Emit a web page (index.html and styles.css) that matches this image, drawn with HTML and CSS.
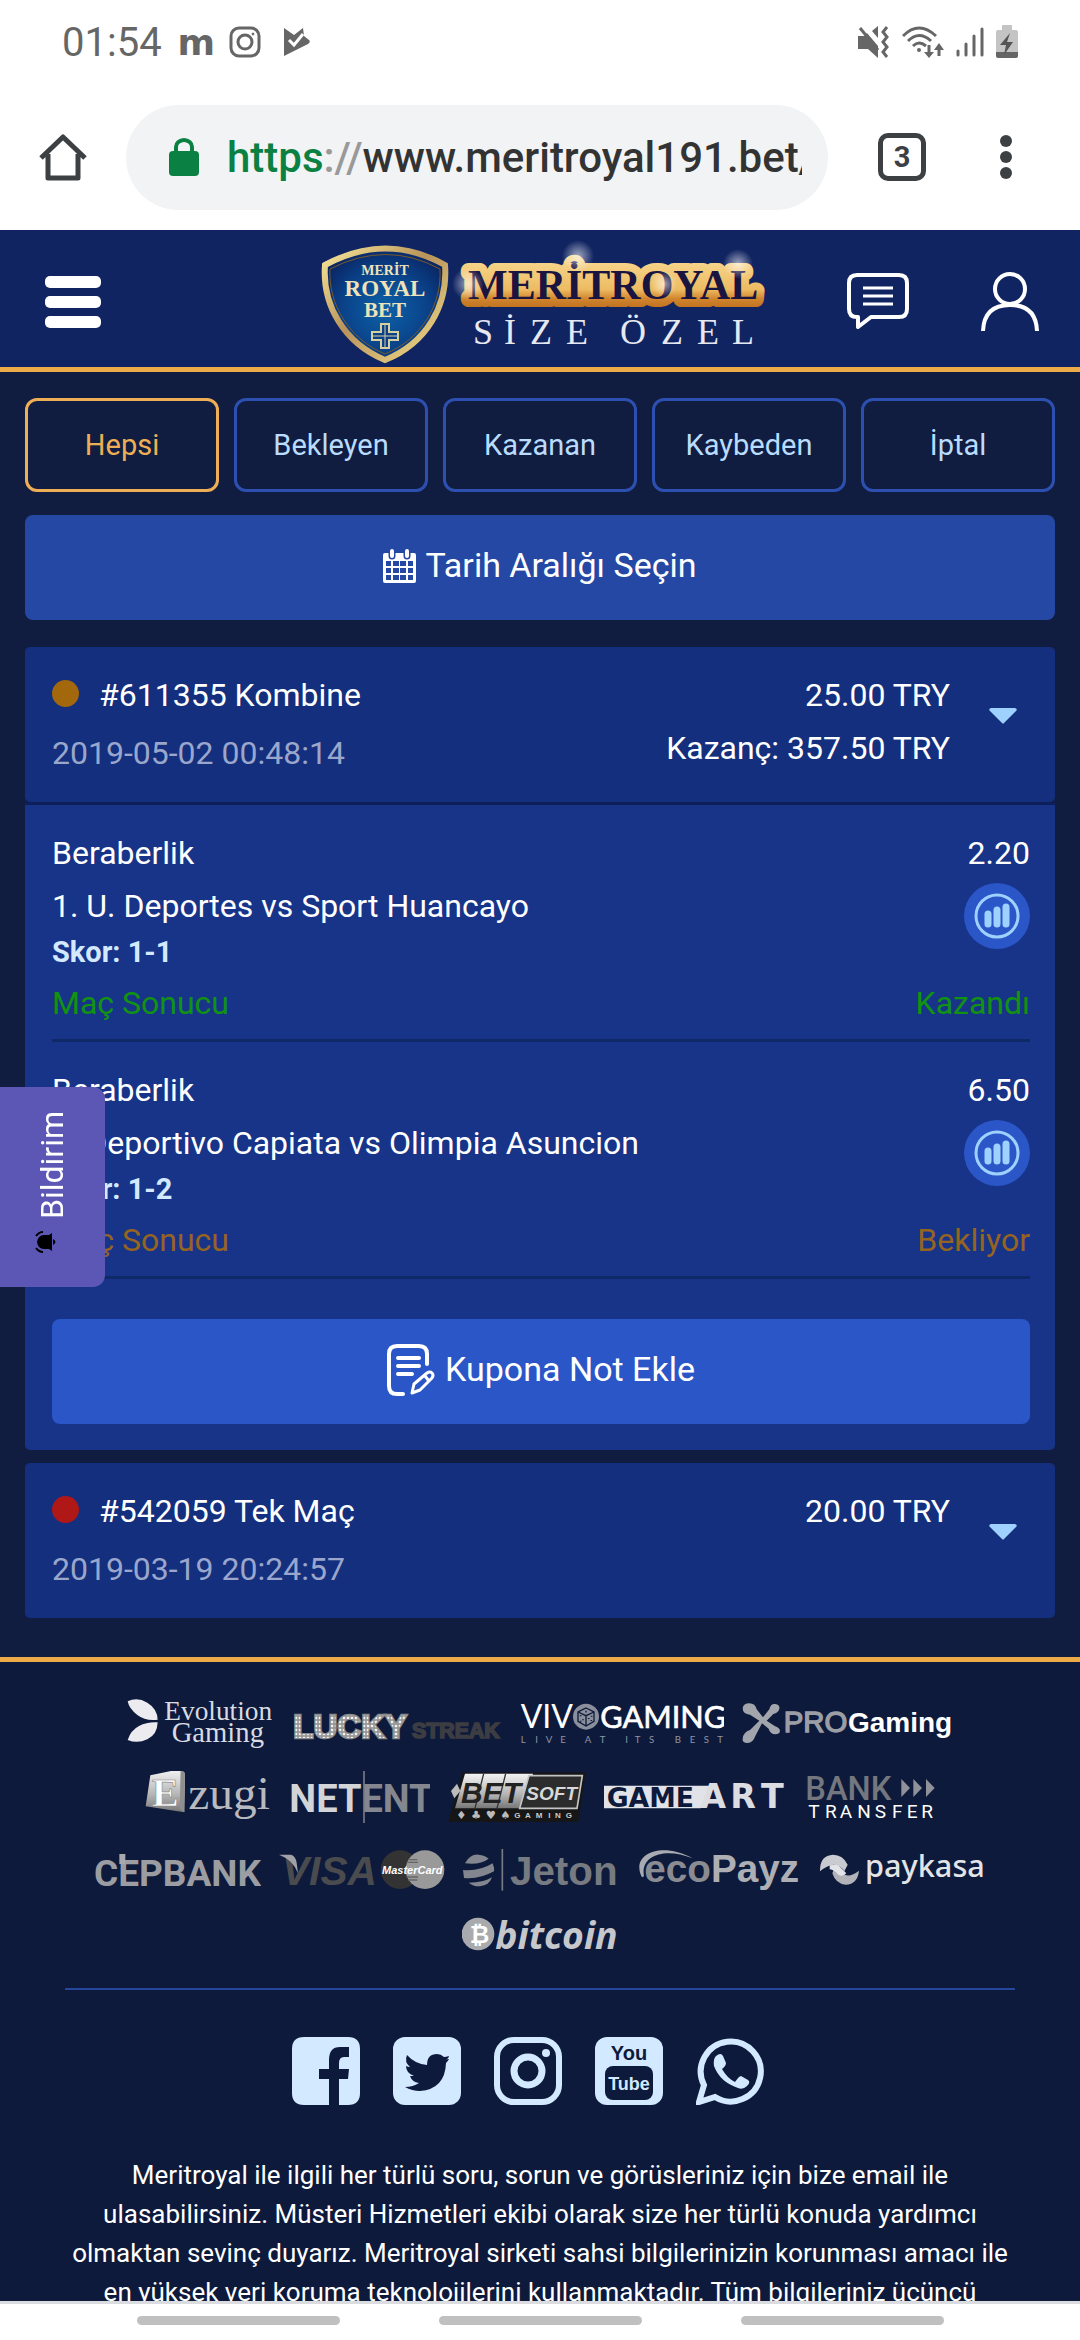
FILE: index.html
```html
<!DOCTYPE html>
<html lang="tr">
<head>
  <meta charset="UTF-8" />
  <meta name="viewport" content="width=device-width, initial-scale=1.0">
  <title>Kuponlarım</title>
  <link rel="stylesheet" href="styles.css">
</head>
<body>
  <div class="status-bar">
    <span class="clock">01:54</span>
    <span class="status-m">m</span>
    <svg class="status-insta" width="32" height="32" viewBox="0 0 32 32" fill="none" stroke="#666" stroke-width="3">
      <rect x="2" y="2" width="28" height="28" rx="8"/>
      <circle cx="16" cy="16" r="7"/>
      <circle cx="24" cy="8" r="1" fill="#666" stroke-width="1"/>
    </svg>
    <svg class="status-play" width="28" height="28" viewBox="0 0 28 28">
      <path d="M2 0l10 7 9-7 1 8 5 4q2 2-1 4L2 28z" fill="#666"/>
      <path d="M7 12l5 5 9-11" fill="none" stroke="#fff" stroke-width="3"/>
    </svg>
    <div class="status-right">
      <svg width="32" height="32" viewBox="0 0 32 32" fill="none" stroke="#666" stroke-width="3">
        <path d="M0 10h6l3-3 11 13v12l-10-9H0z" fill="#666" stroke="none"/>
        <path d="M14 5l6-5v12z" fill="#666" stroke="none"/>
        <path d="M2 2l18 22"/>
        <path d="M29 1l-4 5 4 5-4 5 4 5-4 5 4 5"/>
      </svg>
      <svg width="42" height="32" viewBox="0 0 42 32" fill="none" stroke="#666" stroke-width="3">
        <path d="M1 10q16-16 33 0M6 15q11-11 23 0M11 20q6-6 13 0"/>
        <circle cx="17" cy="24" r="2" fill="#666" stroke="none"/>
        <path d="M27 19v9M37 30v-9"/>
        <path d="M22 26h10l-5 6zM32 24h10l-5-7z" fill="#666" stroke="none"/>
      </svg>
      <svg width="28" height="30" viewBox="0 0 28 30" stroke="#666" stroke-width="3" stroke-linecap="round">
        <path d="M2 24v4M10 17v11M18 9v19M26 2v26"/>
      </svg>
      <svg width="22" height="34" viewBox="0 0 22 34">
        <path d="M6 0h10v5h4q2 0 2 2v20H0V7q0-2 2-2h4z" fill="#c4c4c4"/>
        <path d="M0 27h22v4q0 2-2 2H2q-2 0-2-2z" fill="#666"/>
        <path d="M14 8L4 20h6L8 30l9-13h-6z" fill="#555"/>
      </svg>
    </div>
  </div>

  <div class="toolbar">
    <button class="tool-btn" aria-label="Ana sayfa">
      <svg width="48" height="48" viewBox="0 0 48 48" fill="none" stroke="#3c4043" stroke-width="5" stroke-linejoin="round">
        <path d="M2 25L24 4l22 21M9 21v24h30V21"/>
      </svg>
    </button>
    <div class="url-pill">
      <svg width="30" height="38" viewBox="0 0 30 38">
        <rect y="13" width="30" height="25" rx="4" fill="#0b8043"/>
        <path d="M7 14V9a8 7 0 0 1 16 0v5" fill="none" stroke="#0b8043" stroke-width="4"/>
      </svg>
      <div class="url"><span class="url-scheme">https</span><span class="url-sep">://</span>www.meritroyal191.bet/</div>
    </div>
    <button class="tool-btn tab-count" aria-label="Sekmeler">3</button>
    <button class="tool-btn" aria-label="Menü">
      <svg width="12" height="46" viewBox="0 0 12 46" fill="#3c4043">
        <circle cx="6" cy="7" r="6"/><circle cx="6" cy="23" r="6"/><circle cx="6" cy="39" r="6"/>
      </svg>
    </button>
  </div>

  <div class="page">
    <header class="site-header">
      <button class="icon-btn" aria-label="Menü">
        <svg width="56" height="52" viewBox="0 0 56 52" fill="#fff">
          <rect y="0" width="56" height="12" rx="5"/><rect y="20" width="56" height="12" rx="5"/><rect y="40" width="56" height="12" rx="5"/>
        </svg>
      </button>
      <a href="#" class="brand" aria-label="Merit Royal">
        <svg width="446" height="124" viewBox="317 240 446 124">
          <defs>
            <linearGradient id="gold" x1="0" y1="0" x2="0" y2="1">
              <stop offset="0" stop-color="#f6d48a"/><stop offset=".6" stop-color="#edbb62"/><stop offset=".8" stop-color="#d0852e"/><stop offset="1" stop-color="#c0711f"/>
            </linearGradient>
            <linearGradient id="rim" x1="0" y1="0" x2="1" y2="1">
              <stop offset="0" stop-color="#f8e698"/><stop offset=".45" stop-color="#b8935a"/><stop offset="1" stop-color="#f4e08c"/>
            </linearGradient>
            <radialGradient id="blue" cx=".5" cy=".55" r=".6">
              <stop offset="0" stop-color="#0d62a8"/><stop offset=".6" stop-color="#0a4188"/><stop offset="1" stop-color="#0a2462"/>
            </radialGradient>
            <radialGradient id="shine">
              <stop offset="0" stop-color="#fff" stop-opacity=".6"/><stop offset="1" stop-color="#fff" stop-opacity="0"/>
            </radialGradient>
          </defs>
          <path d="M323 265Q384 232 443 265C446 305 425 343 383 360C342 343 320 305 323 265z" fill="url(#blue)" stroke="url(#rim)" stroke-width="6"/>
          <path d="M328 269Q384 240 438 269C440 304 420 339 383 354C347 339 326 304 328 269z" fill="none" stroke="#7a5a2a" stroke-width="1"/>
          <g fill="#f0e2b8" font-family="Liberation Serif, serif" font-weight="bold" text-anchor="middle">
            <text x="383" y="275" font-size="14">MERİT</text>
            <text x="383" y="296" font-size="23">ROYAL</text>
            <text x="383" y="317" font-size="21">BET</text>
          </g>
          <path d="M379 324h8v8h9v8h-9v8h-8v-8h-9v-8h9z" fill="#0a4188" stroke="#d8cf9e" stroke-width="2"/>
          <path d="M383 324v24M370 336h26" stroke="#d8cf9e"/>
          <text x="466" y="299" font-family="Liberation Serif, serif" font-size="42" font-weight="bold" fill="#1a1440" stroke="url(#gold)" stroke-width="16" stroke-linejoin="round" paint-order="stroke">MERİTROYAL</text>
          <circle cx="576" cy="256" r="16" fill="url(#shine)"/>
          <circle cx="736" cy="264" r="15" fill="url(#shine)"/>
          <circle cx="662" cy="284" r="13" fill="url(#shine)"/>
          <circle cx="466" cy="284" r="16" fill="url(#shine)"/>
          <text x="471 502 528 564 618 659 695 730" y="344" fill="#e6e8f2" font-family="Liberation Serif, serif" font-size="36">SİZEÖZEL</text>
        </svg>
      </a>
      <div class="header-right">
        <button class="icon-btn" aria-label="Mesajlar">
          <svg width="62" height="58" viewBox="0 0 62 58" fill="none" stroke="#fff" stroke-width="4">
            <path d="M10 2h42q8 0 8 8v26q0 8-8 8H24L11 54V44h-1q-8 0-8-8V10q0-8 8-8z" stroke-linejoin="round"/>
            <path d="M16 15h30M16 23h30M16 31h30" stroke-width="3"/>
          </svg>
        </button>
        <button class="icon-btn" aria-label="Hesabım">
          <svg width="58" height="60" viewBox="0 0 58 60" fill="none" stroke="#fff" stroke-width="4">
            <circle cx="29" cy="17" r="15"/>
            <path d="M2 59Q3 33 29 33t27 26"/>
          </svg>
        </button>
      </div>
    </header>

    <main class="content">
      <div class="tabs">
        <button class="tab active">Hepsi</button>
        <button class="tab">Bekleyen</button>
        <button class="tab">Kazanan</button>
        <button class="tab">Kaybeden</button>
        <button class="tab">İptal</button>
      </div>

      <button class="btn date-btn">
        <svg width="33" height="35" viewBox="0 0 33 35">
          <path d="M2 5h29q2 0 2 2v26q0 2-2 2H2q-2 0-2-2V7q0-2 2-2z" fill="#fff"/>
          <path d="M3 13h5v5H3zM10 13h6v5h-6zM17 13h6v5h-6zM25 13h5v5h-5zM3 20h5v5H3zM10 20h6v5h-6zM17 20h6v5h-6zM25 20h5v5h-5zM3 27h5v5H3zM10 27h6v5h-6zM17 27h6v5h-6zM25 27h5v5h-5z" fill="#2548a5"/>
          <path d="M9 3v5M24 3v5" stroke="#2548a5" stroke-width="7" stroke-linecap="round"/>
          <path d="M9 3v5M24 3v5" stroke="#fff" stroke-width="4" stroke-linecap="round"/>
        </svg>
        Tarih Aralığı Seçin
      </button>

      <section class="coupon">
        <button class="coupon-head">
          <span class="coupon-info">
            <span class="coupon-title"><i class="dot pending"></i>#611355 Kombine</span>
            <span class="coupon-date">2019-05-02 00:48:14</span>
          </span>
          <span class="coupon-sum">
            <span>25.00 TRY</span>
            <span>Kazanç: 357.50 TRY</span>
          </span>
          <svg class="caret" width="28" height="16" viewBox="0 0 28 16"><path d="M2 0h24q3 1 1 3L15 15q-1 1-2 0L1 3q-2-2 1-3z" fill="#9fd1ff"/></svg>
        </button>
        <div class="coupon-body">
          <div class="bet">
            <div class="row"><span>Beraberlik</span><span>2.20</span></div>
            <div class="row">
              <div>
                <div>1. U. Deportes vs Sport Huancayo</div>
                <div class="score">Skor: 1-1</div>
              </div>
              <button class="stats" aria-label="İstatistik">
                <svg width="46" height="46" viewBox="0 0 46 46" fill="none" stroke="#9fd1ff" stroke-linecap="round">
                  <circle cx="23" cy="23" r="21" stroke-width="3"/>
                  <path d="M14 21v10M23 17v14M32 14v17" stroke-width="7"/>
                </svg>
              </button>
            </div>
            <div class="row result won"><span>Maç Sonucu</span><span>Kazandı</span></div>
          </div>
          <div class="bet">
            <div class="row"><span>Beraberlik</span><span>6.50</span></div>
            <div class="row">
              <div>
                <div>1. Deportivo Capiata vs Olimpia Asuncion</div>
                <div class="score">Skor: 1-2</div>
              </div>
              <button class="stats" aria-label="İstatistik">
                <svg width="46" height="46" viewBox="0 0 46 46" fill="none" stroke="#9fd1ff" stroke-linecap="round">
                  <circle cx="23" cy="23" r="21" stroke-width="3"/>
                  <path d="M14 21v10M23 17v14M32 14v17" stroke-width="7"/>
                </svg>
              </button>
            </div>
            <div class="row result waiting"><span>Maç Sonucu</span><span>Bekliyor</span></div>
          </div>
          <button class="btn note-btn">
            <svg width="49" height="52" viewBox="0 0 49 52" fill="none" stroke="#fff" stroke-width="4" stroke-linecap="round" stroke-linejoin="round">
              <path d="M40 20V10q0-8-8-8H10q-8 0-8 8v32q0 8 8 8h6"/>
              <path d="M11 14h21M11 22h21M11 30h14"/>
              <path d="M25 49l2-9 13-11q3-2 5 0t0 5L33 46zM38 32l4 5" stroke-width="3"/>
            </svg>
            Kupona Not Ekle
          </button>
        </div>
      </section>

      <section class="coupon">
        <button class="coupon-head">
          <span class="coupon-info">
            <span class="coupon-title"><i class="dot lost"></i>#542059 Tek Maç</span>
            <span class="coupon-date">2019-03-19 20:24:57</span>
          </span>
          <span class="coupon-sum">
            <span>20.00 TRY</span>
          </span>
          <svg class="caret" width="28" height="16" viewBox="0 0 28 16"><path d="M2 0h24q3 1 1 3L15 15q-1 1-2 0L1 3q-2-2 1-3z" fill="#9fd1ff"/></svg>
        </button>
      </section>
    </main>

    <footer class="site-footer">
      <div class="partners">
        <div class="partner-row">
          <svg width="147" height="52" viewBox="144 54 441 156">
            <path d="M146 64Q175 50 205 68T236 119Q200 124 175 105T146 64zM236 127Q205 125 180 138T146 180Q175 192 205 178T236 127z" fill="#ececf0"/>
            <g fill="#d9dbe2" font-family="Liberation Serif, serif"><text x="256" y="120" font-size="82">Evolution</text><text x="278" y="187" font-size="86">Gaming</text></g>
          </svg>
          <svg width="210" height="52" viewBox="642 54 630 156">
            <defs><pattern id="bulbs" width="12" height="12" patternUnits="userSpaceOnUse"><rect width="12" height="12" fill="#999"/><circle cx="6" cy="6" r="4" fill="#f2f2f2"/></pattern></defs>
            <text x="646" y="173" font-family="Liberation Sans, sans-serif" font-weight="bold" font-size="99" fill="url(#bulbs)" stroke="#8a8a8a" stroke-width="8" paint-order="stroke">LUCKY</text>
            <text x="1002" y="173" font-family="Liberation Sans, sans-serif" font-weight="bold" font-size="64" fill="#3c3d42" stroke="#3c3d42" stroke-width="5">STREAK</text>
          </svg>
          <svg width="204" height="52" viewBox="1326 54 612 156" fill="#fff" font-family="Lato, sans-serif">
            <text x="1328" y="144" font-size="96">VIV</text>
            <circle cx="1524" cy="110" r="39" fill="#8b8f9c"/>
            <path d="M1524 84l24 12v28l-24 14-24-14V96zM1500 96l24 11 24-11M1524 107v31" fill="none" stroke="#0d1a3b" stroke-width="4"/>
            <path d="M1508 106v3M1515 118v3M1508 122v3M1532 114v3M1540 120v3M1541 107v3M1522 95h4" stroke="#0d1a3b" stroke-width="5"/>
            <text x="1567" y="144" font-size="92" stroke="#fff" stroke-width="2">GAMING</text>
            <text x="1328 1372 1403 1447 1520 1565 1642 1670 1713 1790 1835 1877 1918" y="190" font-size="29" fill="#9095a5">LIVEATITSBEST</text>
          </svg>
          <svg width="212" height="52" viewBox="608 54 636 156" font-family="Liberation Sans, sans-serif" font-size="84">
            <path d="M610 85Q612 70 630 70T652 88L671 112 690 88Q694 70 708 72T720 86Q718 98 702 102L682 122 706 138Q722 144 722 153T708 163Q692 162 688 146L668 130 648 168Q640 190 624 189T610 176Q612 156 632 150L660 122 632 104Q610 102 610 85z" fill="#a3a5ac"/>
            <text x="733" y="156" fill="#9c9ea6" stroke="#9c9ea6" stroke-width="4" font-size="88">PRO</text>
            <text x="926" y="156" fill="#fff" font-weight="bold">Gaming</text>
          </svg>
        </div>
        <div class="partner-row">
          <svg width="127" height="52" viewBox="198 276 381 156" font-family="Liberation Serif, serif">
            <defs><linearGradient id="steel" x1="0" y1="0" x2="0" y2="1"><stop offset="0" stop-color="#f4f4f4"/><stop offset=".6" stop-color="#b4b4b4"/><stop offset="1" stop-color="#777"/></linearGradient></defs>
            <path d="M214 289L305 270l13 13-2 117-116-18z" fill="url(#steel)"/>
            <path d="M305 270l13 13-2 117-14-10z" fill="#8f8f8f"/>
            <text x="218" y="382" font-size="122" font-weight="bold" fill="#fff" stroke="#888" stroke-width="2">E</text>
            <text x="328" y="390" font-size="142" fill="#b9babf">zugi</text>
          </svg>
          <svg width="140" height="52" viewBox="636 276 420 156">
            <text x="634" y="400" font-family="Roboto, sans-serif" font-weight="bold" font-size="114" fill="#d3d4d8">NET<tspan fill="#84878f">ENT</tspan></text>
            <path d="M858 276v156" stroke="#777a84" stroke-width="5"/>
          </svg>
          <svg width="138" height="52" viewBox="1107 276 414 156" font-family="Liberation Sans, sans-serif" font-weight="bold">
            <path d="M1150 280h370l-22 148h-390z" fill="#161616"/>
            <path d="M1158 284h204l-30 104h-204z" fill="url(#steel)"/>
            <path d="M1350 290h160l-16 98h-172z" fill="#2c2c2c" stroke="#c4c4c4" stroke-width="5"/>
            <path d="M1116 336l18-22 10 22-18 22z" fill="#bbb"/>
            <path d="M1214 284l-26 104M1280 284l-26 104" stroke="#333" stroke-width="4"/>
            <text x="1146" y="372" font-size="90" font-style="italic" fill="#222">BET</text>
            <text x="1342" y="364" font-size="57" font-style="italic" fill="#d8d8d8">SOFT</text>
            <text x="1132 1176 1220 1264" y="420" font-family="DejaVu Sans, sans-serif" font-size="34" fill="#bbb">♦♣♥♠</text>
            <text x="1306 1338 1370 1408 1428 1460" y="418" font-size="24" fill="#ccc">GAMING</text>
          </svg>
          <svg width="184" height="52" viewBox="195 276 552 156" font-family="DejaVu Sans, sans-serif" font-weight="bold">
            <path d="M195 320h328l-38 68H195z" fill="#e2e3e8"/>
            <text x="203" y="383" font-size="80" fill="#0d1a3b">GAME</text>
            <text x="484 574 666" y="388" font-size="100" fill="#dcdde2">ART</text>
          </svg>
          <svg width="130" height="52" viewBox="801 276 390 156" font-family="Roboto, sans-serif">
            <text x="799" y="363" font-size="98" font-weight="500" fill="#75777e">BANK</text>
            <path d="M1087 300l26 27-26 27zM1123 300l26 27-26 27zM1161 300l26 27-26 27z" fill="#90929a"/>
            <text x="808 858 902 955 1007 1059 1103 1147" y="416" font-size="57" fill="#fff">TRANSFER</text>
          </svg>
        </div>
        <div class="partner-row">
          <svg width="166" height="52" viewBox="45 498 498 156">
            <text x="42" y="623" font-family="Roboto, sans-serif" font-weight="bold" font-size="111" fill="#9b9da3">CEPBANK</text>
            <path d="M118 528h18v30h-18z" fill="#a7a9af"/>
          </svg>
          <svg width="166" height="52" viewBox="597 498 498 156" font-family="Liberation Sans, sans-serif" font-weight="bold" font-style="italic">
            <text x="606" y="620" font-size="122" fill="#4a4b4f">VISA</text>
            <path d="M597 530h36q14 4 17 24l4 32q-14-40-57-56z" fill="#a0a2a8"/>
            <circle cx="960" cy="575" r="58" fill="#333"/><circle cx="1035" cy="575" r="58" fill="#999"/>
            <path d="M984 545h28M980 553h34M980 597h34M984 606h28" stroke="#666" stroke-width="4"/>
            <text x="906" y="587" font-size="33" fill="#fff">MasterCard</text>
          </svg>
          <svg width="156" height="52" viewBox="1149 498 468 156">
            <path d="M1155 556Q1170 528 1196 530 1215 532 1226 542 1200 562 1155 556zM1149 576Q1200 580 1238 556 1244 570 1242 580 1200 604 1152 600zM1166 614Q1210 614 1236 598 1228 622 1200 625 1180 626 1166 614z" fill="#83868e"/>
            <path d="M1267 513v125" stroke="#777a84" stroke-width="5"/>
            <text x="1290" y="622" font-family="Liberation Sans, sans-serif" font-weight="bold" font-size="121" fill="#777a80">Jeton</text>
          </svg>
          <svg width="165" height="52" viewBox="291 498 495 156">
            <path d="M306 598C270 530 360 488 458 541 380 508 300 528 312 595z" fill="#a9abb2"/>
            <text x="313" y="612" font-family="Liberation Sans, sans-serif" font-weight="bold" font-size="116" fill="#8a8c92">eco<tspan fill="#adafb5">Payz</tspan></text>
          </svg>
          <svg width="166" height="52" viewBox="843 498 498 156">
            <path d="M843 580Q842 532 882 530 912 530 926 560L916 580Q890 540 843 580z" fill="#c9cbd0"/>
            <path d="M890 560l28 30q16 8 42-12-4 40-40 42-30-2-40-34z" fill="#b1b3b9"/>
            <path d="M872 562q16-4 26 0l24 24q-12 12-24 4-12-14-26-16z" fill="#e3e4e8"/>
            <text x="978" y="598" font-family="Noto Sans, sans-serif" font-weight="500" font-size="92" fill="#e3e4e8">paykasa</text>
          </svg>
        </div>
        <div class="partner-row">
          <svg width="156" height="34" viewBox="1149 711 468 102">
            <circle cx="1197" cy="762" r="49" fill="#a9aaae"/>
            <text x="1172" y="790" font-family="DejaVu Sans, sans-serif" font-weight="bold" font-size="72" fill="#fff">₿</text>
            <text x="1249" y="808" font-family="Noto Sans, sans-serif" font-weight="bold" font-style="italic" font-size="112" fill="#c6c7cb">bitcoin</text>
          </svg>
        </div>
      </div>

      <div class="social">
        <a href="#" aria-label="Facebook">
          <svg width="68" height="68" viewBox="0 0 68 68"><path d="M12 0h44q12 0 12 12v44q0 12-12 12h-9V42h9l1-10H47v-6q0-6 5-6h5V10h-9Q37 10 37 23v9H27v10h10v26H12Q0 68 0 56V12Q0 0 12 0z" fill="#d3e9ff"/></svg>
        </a>
        <a href="#" aria-label="Twitter">
          <svg width="68" height="68" viewBox="0 0 68 68"><rect width="68" height="68" rx="12" fill="#d3e9ff"/><path d="M56 22q-2 0-3 1 3-2 3-4-3 1-5 1-3-3-7-3-10 0-10 11-12-1-20-10-3 7 3 12-2 0-4-1 0 7 8 10h-4q2 6 9 7-6 4-14 4 7 4 15 4 25-2 26-28 2-2 3-4z" fill="#0d1a3b"/></svg>
        </a>
        <a href="#" aria-label="Instagram">
          <svg width="68" height="68" viewBox="0 0 68 68" fill="none" stroke="#d3e9ff"><rect x="3" y="3" width="62" height="62" rx="17" stroke-width="6"/><circle cx="34" cy="34" r="14" stroke-width="7"/><circle cx="52" cy="16" r="4" fill="#d3e9ff" stroke="none"/></svg>
        </a>
        <a href="#" aria-label="YouTube">
          <svg width="68" height="68" viewBox="0 0 68 68" font-family="Liberation Sans, sans-serif" font-weight="bold" text-anchor="middle">
            <rect width="68" height="68" rx="12" fill="#d3e9ff"/><rect x="10" y="29" width="48" height="34" rx="8" fill="#0d1a3b"/>
            <text x="34" y="23" font-size="20" fill="#0d1a3b">You</text><text x="34" y="53" font-size="18" fill="#d3e9ff">Tube</text>
          </svg>
        </a>
        <a href="#" aria-label="WhatsApp">
          <svg width="68" height="68" viewBox="0 0 68 68"><path d="M3 65l5-17A30 30 0 1 1 19 60z" fill="none" stroke="#d3e9ff" stroke-width="6"/><path d="M20 19q5-4 7 0l3 7q0 3-4 6 5 9 13 13 4-6 6-6l7 4q3 2-1 6-4 4-9 2-18-6-24-22-1-7 2-10z" fill="#d3e9ff"/></svg>
        </a>
      </div>

      <p class="about">Meritroyal ile ilgili her türlü soru, sorun ve görüsleriniz için bize email ile ulasabilirsiniz. Müsteri Hizmetleri ekibi olarak size her türlü konuda yardımcı olmaktan sevinç duyarız. Meritroyal sirketi sahsi bilgilerinizin korunması amacı ile en yüksek veri koruma teknolojilerini kullanmaktadır. Tüm bilgileriniz üçüncü</p>
    </footer>
  </div>

  <button class="notice">
    <svg width="22" height="22" viewBox="0 0 22 22"><path d="M2 17l2-3V9q0-6 7-7 7 1 7 7v5l2 3zM8 18h6q-3 5-6 0z"/><path d="M1 8q0-4 4-7M21 8q0-4-4-7" fill="none" stroke="#000" stroke-width="2"/></svg>
    Bildirim
  </button>

  <div class="nav-hints"><span></span><span></span><span></span></div>
</body>
</html>
```

FILE: styles.css
```css
* {
  box-sizing: border-box;
}

body {
  margin: 0;
  height: 100vh;
  display: flex;
  flex-direction: column;
  overflow: hidden;
  background: #fff;
  color: #fff;
  font-family: Roboto, sans-serif;
  font-size: 32px;
  line-height: 53px;
}

button {
  border: none;
  margin: 0;
  padding: 0;
  background: none;
  color: inherit;
  font: inherit;
  cursor: pointer;
}

svg {
  display: block;
  flex: none;
}

/* phone status bar */
.status-bar {
  flex: none;
  display: flex;
  align-items: center;
  height: 84px;
  padding: 0 62px;
  color: #666;
}

.clock {
  font-size: 40px;
}

.status-m {
  margin-left: 16px;
  font-family: "DejaVu Sans", sans-serif;
  font-size: 36px;
  font-weight: bold;
}

.status-insta {
  margin-left: 14px;
}

.status-play {
  margin-left: 21px;
}

.status-right {
  display: flex;
  align-items: center;
  gap: 12px;
  margin-left: auto;
}

/* browser toolbar */
.toolbar {
  flex: none;
  display: flex;
  align-items: center;
  height: 146px;
  padding: 0 68px 0 39px;
}

.url-pill {
  flex: 1;
  display: flex;
  align-items: center;
  gap: 28px;
  height: 105px;
  margin: 0 50px 0 39px;
  padding: 0 26px 0 43px;
  border-radius: 53px;
  background: #f1f3f4;
  overflow: hidden;
}

.url {
  flex: 1;
  min-width: 0;
  overflow: hidden;
  white-space: nowrap;
  color: #333;
  font-size: 42px;
  font-weight: 500;
}

.url-scheme {
  color: #0b8043;
}

.url-sep {
  color: #999;
}

.tab-count {
  width: 48px;
  height: 48px;
  margin-right: 74px;
  border: 5px solid #3c4043;
  border-radius: 10px;
  color: #3c4043;
  font-size: 29px;
  font-weight: bold;
  line-height: 38px;
}

/* site */
.page {
  flex: 1;
  min-height: 0;
  overflow: hidden;
  background: #101d40;
}

.site-header {
  display: grid;
  grid-template-columns: 1fr auto 1fr;
  align-items: center;
  padding: 10px 41px 3px 45px;
  border-bottom: 5px solid #eeac48;
  background: #112462;
}

.site-header > .icon-btn {
  justify-self: start;
}

.header-right {
  display: flex;
  align-items: center;
  justify-content: flex-end;
  gap: 72px;
}

.content {
  padding: 26px 25px 39px;
}

.tabs {
  display: grid;
  grid-template-columns: repeat(5, 1fr);
  gap: 15px;
  margin-bottom: 23px;
}

.tab {
  height: 94px;
  border: 3px solid #2d50b0;
  border-radius: 12px;
  color: #b9dcff;
  font-size: 29px;
}

.tab.active {
  border-color: #eeae55;
  color: #eeae55;
}

.btn {
  display: flex;
  align-items: center;
  justify-content: center;
  gap: 9px;
  width: 100%;
  height: 105px;
  padding-bottom: 4px;
  border-radius: 8px;
  font-size: 34px;
}

.date-btn {
  margin-bottom: 27px;
  background: #2548a5;
}

.coupon + .coupon {
  margin-top: 13px;
}

.coupon-head {
  display: flex;
  width: 100%;
  padding: 22px 38px 22px 27px;
  border-radius: 5px;
  background: #142f7d;
  text-align: left;
}

.coupon-info,
.coupon-sum {
  display: flex;
  flex-direction: column;
}

.coupon-info {
  flex: 1;
  gap: 5px;
}

.coupon-sum {
  text-align: right;
}

.coupon-title {
  display: flex;
  align-items: center;
}

.coupon-date {
  color: #9aa6cc;
}

.dot {
  width: 27px;
  height: 27px;
  margin: 0 20px 4px 0;
  border-radius: 50%;
}

.pending {
  background: #a3670c;
}

.lost {
  background: #b01818;
}

.caret {
  align-self: center;
  margin: 0 0 17px 39px;
}

.coupon-body {
  padding: 0 25px 26px 27px;
  border-top: 3px solid #0d1f58;
  border-radius: 0 0 5px 5px;
  background: #173489;
}

.bet {
  padding: 22px 0 9px;
  border-bottom: 3px solid #0f2867;
}

.row {
  display: flex;
  justify-content: space-between;
}

.score {
  color: #d3e9ff;
  font-size: 29px;
  font-weight: bold;
  line-height: 39px;
}

.stats {
  display: flex;
  align-items: center;
  justify-content: center;
  width: 66px;
  height: 66px;
  margin-top: 3px;
  border-radius: 50%;
  background: #2b56c7;
}

.result {
  margin-top: 5px;
}

.won {
  color: #129212;
}

.waiting {
  color: #966420;
}

.note-btn {
  margin-top: 40px;
  background: #2b56c7;
}

.site-footer {
  padding: 36px 60px;
  border-top: 5px solid #eeac48;
  background: #0d1a3b;
}

.partners {
  display: flex;
  flex-direction: column;
  gap: 21px;
  margin: 0 5px;
  padding-bottom: 37px;
  border-bottom: 2px solid #24479b;
}

.partner-row {
  display: flex;
  justify-content: center;
  gap: 18px;
}

.social {
  display: flex;
  justify-content: center;
  gap: 33px;
  margin-top: 47px;
  padding-right: 24px;
}

.about {
  margin: 51px 0 0;
  font-size: 26px;
  line-height: 39px;
  text-align: center;
}

/* notification tab over the page, reads bottom to top */
.notice {
  position: fixed;
  left: 0;
  top: 1087px;
  display: flex;
  align-items: center;
  justify-content: flex-start;
  gap: 12px;
  width: 105px;
  height: 200px;
  padding-top: 34px;
  border-radius: 12px 0 0 12px;
  background: #5c57b5;
  writing-mode: vertical-rl;
  transform: rotate(180deg);
}

.notice svg {
  margin-left: 12px;
  transform: rotate(90deg);
}

/* phone gesture hints */
.nav-hints {
  flex: none;
  display: flex;
  justify-content: center;
  gap: 99px;
  height: 39px;
  padding-top: 12px;
  border-top: 3px solid #dadce0;
  background: #fff;
}

.nav-hints span {
  width: 203px;
  height: 9px;
  border-radius: 5px;
  background: #c0c0c0;
}
```
